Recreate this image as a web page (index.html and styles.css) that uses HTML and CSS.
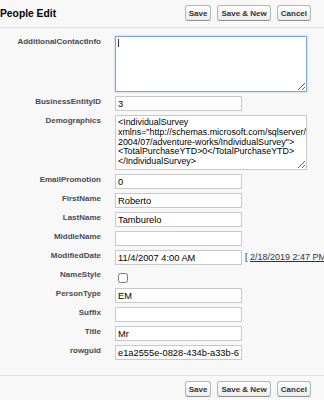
FILE: index.html
```html
<!DOCTYPE html>
<html lang="en">
<head>
    <meta charset="UTF-8">
    <meta name="viewport" content="width=device-width, initial-scale=1.0">
    <title>People Edit</title>
    <link rel="stylesheet" href="styles.css">
</head>
<body>
    <div class="page-block">
        <div class="block-header">
            <h2 class="block-title">People Edit</h2>
            <div class="block-buttons">
                <button class="btn" type="button">Save</button>
                <button class="btn" type="button">Save &amp; New</button>
                <button class="btn" type="button">Cancel</button>
            </div>
        </div>

        <form class="edit-form" onsubmit="event.preventDefault()">
            <label class="field-label">AdditionalContactInfo</label>
            <div class="field-cell">
                <span class="focus-wrap">
                    <textarea class="field-area is-focused first-area"></textarea>
                    <span class="caret"></span>
                </span>
            </div>

            <label class="field-label">BusinessEntityID</label>
            <div class="field-cell"><input class="field-input" type="text" value="3"></div>

            <label class="field-label">Demographics</label>
            <div class="field-cell"><textarea class="field-area demo-area">&lt;IndividualSurvey
xmlns="http://schemas.microsoft.com/sqlserver/
2004/07/adventure-works/IndividualSurvey"&gt;
&lt;TotalPurchaseYTD&gt;0&lt;/TotalPurchaseYTD&gt;
&lt;/IndividualSurvey&gt;</textarea></div>

            <label class="field-label">EmailPromotion</label>
            <div class="field-cell"><input class="field-input" type="text" value="0"></div>

            <label class="field-label">FirstName</label>
            <div class="field-cell"><input class="field-input" type="text" value="Roberto"></div>

            <label class="field-label">LastName</label>
            <div class="field-cell"><input class="field-input" type="text" value="Tamburelo"></div>

            <label class="field-label">MiddleName</label>
            <div class="field-cell"><input class="field-input" type="text" value=""></div>

            <label class="field-label">ModifiedDate</label>
            <div class="field-cell date-cell">
                <input class="field-input" type="text" value="11/4/2007 4:00 AM">
                <span class="date-link">[ <a href="#">2/18/2019 2:47 PM</a> ]</span>
            </div>

            <label class="field-label">NameStyle</label>
            <div class="field-cell"><input class="field-check" type="checkbox"></div>

            <label class="field-label">PersonType</label>
            <div class="field-cell"><input class="field-input" type="text" value="EM"></div>

            <label class="field-label">Suffix</label>
            <div class="field-cell"><input class="field-input" type="text" value=""></div>

            <label class="field-label">Title</label>
            <div class="field-cell"><input class="field-input" type="text" value="Mr"></div>

            <label class="field-label">rowguid</label>
            <div class="field-cell"><input class="field-input" type="text" value="e1a2555e-0828-434b-a33b-6f38136a37de"></div>
        </form>

        <div class="block-footer">
            <div class="block-buttons">
                <button class="btn" type="button">Save</button>
                <button class="btn" type="button">Save &amp; New</button>
                <button class="btn" type="button">Cancel</button>
            </div>
        </div>
    </div>
</body>
</html>
```

FILE: styles.css
```css
body {
    margin: 0;
    background-color: #f8f8f8;
    font-family: "Liberation Sans", Arial, sans-serif;
    color: #000;
    overflow: hidden;
}
.page-block {
    width: 324px;
}
.block-header {
    display: flex;
    justify-content: space-between;
    align-items: flex-start;
    height: 28px;
    box-sizing: border-box;
    border-bottom: 1px solid #e0e0e0;
}
.block-title {
    margin: 8px 0 0 0;
    font-size: 10.3px;
    line-height: 12px;
    font-weight: bold;
    color: #000;
}
.block-buttons {
    display: flex;
    gap: 6px;
    padding: 5px 13px 0 0;
}
.btn {
    height: 16px;
    padding: 0 3px;
    font-family: "Liberation Sans", Arial, sans-serif;
    font-size: 8px;
    font-weight: bold;
    color: #333;
    background: linear-gradient(#ffffff, #ececec);
    border: 1px solid #b5b5b5;
    border-bottom-color: #8f8f8f;
    border-radius: 3px;
    cursor: pointer;
}
.edit-form {
    display: grid;
    grid-template-columns: 101px 1fr;
    column-gap: 14px;
    row-gap: 4px;
    padding: 8px 0 15px 0;
}
.field-label {
    font-size: 8px;
    line-height: 10px;
    font-weight: bold;
    color: #4a4a56;
    text-align: right;
    white-space: nowrap;
    padding-top: 1px;
}
.field-cell {
    display: flex;
    align-items: flex-start;
    min-width: 0;
}
.field-input {
    width: 127px;
    height: 15px;
    box-sizing: border-box;
    margin: 0;
    padding: 0 2px;
    border: 1px solid #c9c9c9;
    background: #fff;
    font-family: "Liberation Sans", Arial, sans-serif;
    font-size: 9.3px;
    color: #000;
}
.field-area {
    display: block;
    width: 192px;
    box-sizing: border-box;
    margin: 0;
    padding: 2px 2px;
    border: 1px solid #c9c9c9;
    background: #fff;
    font-family: "Liberation Sans", Arial, sans-serif;
    font-size: 8.9px;
    line-height: 9.8px;
    color: #000;
    white-space: pre;
    overflow: hidden;
}
.first-area { height: 56px; }
.demo-area { height: 55px; }
.is-focused {
    border-color: #7fa6dc;
    box-shadow: 0 0 2px #a9c4ea;
    outline: none;
}
.focus-wrap {
    position: relative;
    display: block;
}
.caret {
    position: absolute;
    left: 3px;
    top: 3px;
    width: 1px;
    height: 8px;
    background: #333;
}
.date-cell {
    white-space: nowrap;
    gap: 3px;
}
.date-cell .field-input {
    flex: none;
}
.date-link {
    font-size: 9px;
    line-height: 15px;
    color: #333;
}
.date-link a {
    color: #333;
}
.field-check {
    width: 10px;
    height: 10px;
    margin: 4px 0 1px 3px;
}
.block-footer {
    border-top: 1px solid #e0e0e0;
    display: flex;
    justify-content: flex-end;
}
```
